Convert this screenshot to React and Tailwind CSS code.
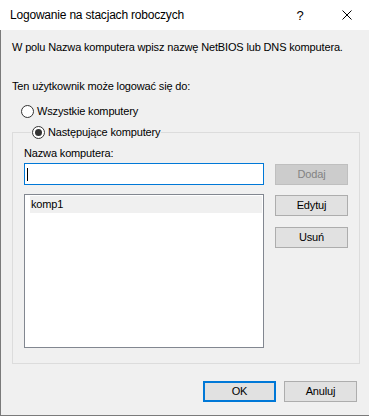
import React from "react";

function Radio({ checked, label }) {
  return (
    <div className="flex items-center h-[15px]">
      <span className="w-[13px] h-[13px] rounded-full border border-[#333333] bg-white flex items-center justify-center">
        {checked && <span className="w-[7px] h-[7px] rounded-full bg-[#333333]" />}
      </span>
      <span className="ml-[3px]">{label}</span>
    </div>
  );
}

function Btn({ children, disabled, primary, className = "" }) {
  let cls = "border-[#adadad] bg-[#e1e1e1] text-black";
  if (disabled) cls = "border-[#bfbfbf] bg-[#cccccc] text-[#838383]";
  if (primary) cls = "border-2 border-[#0078d7] bg-[#e1e1e1] text-black";
  return (
    <div
      className={`w-[73px] h-[21px] border flex items-center justify-center ${cls} ${className}`}
    >
      {children}
    </div>
  );
}

export default function App() {
  return (
    <div
      className="w-[369px] h-[418px] bg-white text-black text-[11px] leading-[15px] tracking-[-0.15px] whitespace-nowrap flex flex-col"
      style={{ fontFamily: '"Liberation Sans", Arial, sans-serif' }}
    >
      <div className="h-[30px] bg-white flex items-center pl-[10px] shrink-0">
        <span className="text-[12px] tracking-[-0.2px]">Logowanie na stacjach roboczych</span>
        <span className="ml-auto w-[10px] text-center text-[13px] mr-[37px]">?</span>
        <svg width="10" height="10" viewBox="0 0 10 10" className="mr-[17px]">
          <path d="M0.5 0.5 L9.5 9.5 M9.5 0.5 L0.5 9.5" stroke="#000" strokeWidth="1" />
        </svg>
      </div>
      <div className="h-[386px] bg-[#f0f0f0] border-l border-b border-[#7a7a7a] pl-[11px] pr-[10px] flex flex-col shrink-0">
        <div className="mt-[10px]">W polu Nazwa komputera wpisz nazwę NetBIOS lub DNS komputera.</div>
        <div className="mt-[24px]">Ten użytkownik może logować się do:</div>
        <div className="mt-[10px] ml-[9px]">
          <Radio label="Wszystkie komputery" />
        </div>
        <fieldset className="mt-[6px] w-[348px] border border-[#dcdcdc] pl-[11px] pr-[11px] pb-[15px]">
          <legend className="ml-[7px] px-[1px]">
            <Radio checked label="Następujące komputery" />
          </legend>
          <div className="mt-[6px]">Nazwa komputera:</div>
          <div className="flex mt-[2px]">
            <div className="w-[240px] flex flex-col">
              <div className="h-[22px] border border-[#0078d7] bg-white flex items-center pl-[2px]">
                <span className="w-[1px] h-[13px] bg-black" />
              </div>
              <div className="mt-[9px] h-[154px] border border-[#828790] bg-white pt-[1px] pl-[5px] pr-[1px]">
                <div className="h-[17px] bg-[#f0f0f0] flex items-center pl-[1px]">komp1</div>
              </div>
            </div>
            <div className="ml-[11px] flex flex-col">
              <Btn disabled className="mt-[1px]">Dodaj</Btn>
              <Btn className="mt-[10px]">Edytuj</Btn>
              <Btn className="mt-[11px]">Usuń</Btn>
            </div>
          </div>
        </fieldset>
        <div className="flex justify-end mt-[17px] pr-[2px] gap-[8px]">
          <Btn primary>OK</Btn>
          <Btn>Anuluj</Btn>
        </div>
      </div>
    </div>
  );
}
